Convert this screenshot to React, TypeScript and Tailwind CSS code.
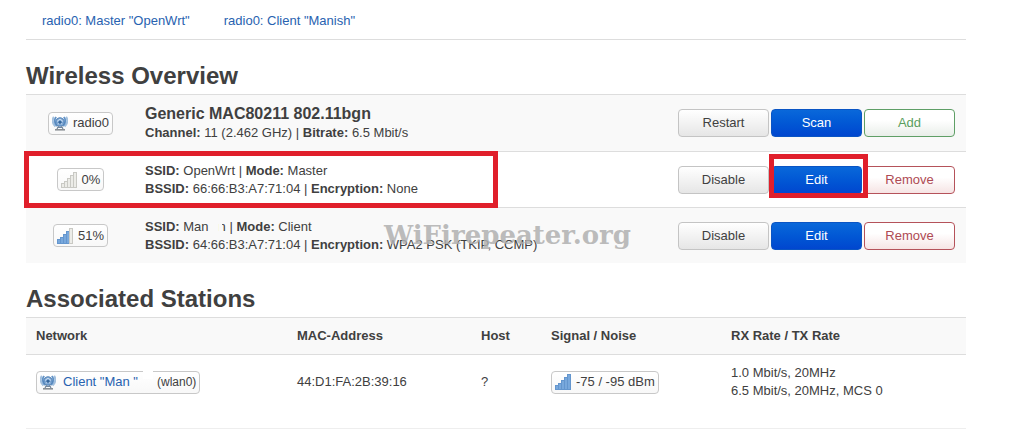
import clsx from "clsx";
import type { ReactNode } from "react";

type Tone = "neutral" | "primary" | "add" | "remove";

const TONES: Record<Tone, string> = {
  neutral: "border-[#c4c4c4] bg-linear-to-b from-white to-[#e6e6e6] text-[#404040]",
  primary: "border-[#0a55c4] bg-linear-to-b from-[#0a68da] to-[#0146cf] text-white",
  add: "border-[#5f9f66] bg-linear-to-b from-white from-40% to-[#e9eee9] text-[#5a9e5e]",
  remove: "border-[#b5525a] bg-linear-to-b from-white from-40% to-[#f6e4e4] text-[#ae4a54]",
};

const BAR_HEIGHTS = [4, 6, 9, 12, 15];

function WifiIcon() {
  return (
    <svg width="16" height="16" viewBox="0 0 16 16" fill="none" aria-hidden="true" className="shrink-0">
      <path d="M2 2C.2 4.500.2 8.500 3.500 11.500M14 2c1.800 2.500 1.800 6.500-1.500 9.500" stroke="#a3c0de" strokeWidth="2.200" />
      <path d="M4.200 2C2 4.500 2.200 8.500 5 11M11.800 2c2.200 2.500 2 6.500-.8 9" stroke="#5f91c6" strokeWidth="1.800" />
      <circle cx="8" cy="7" r="4.200" fill="#7fa9d6" stroke="#4a7cb3" />
      <path d="M5 6.500 8 4l3 2.500M6 9.500 8 7l2 2.500" stroke="#cfe0f2" />
      <circle cx="8" cy="7.200" r="1.500" fill="#35659b" />
      <path d="M6.500 11 5 14M9.500 11l1.500 3M5.500 12.500h5" stroke="#71869c" strokeWidth="1.200" />
      <path d="M3 14.800h10" stroke="#8a8f94" strokeWidth="1.600" />
    </svg>
  );
}

function SignalIcon({ bars }: { bars: number }) {
  return (
    <svg width="16" height="16" viewBox="0 0 16 16" aria-hidden="true" className="shrink-0">
      {BAR_HEIGHTS.map((h, i) => (
        <rect
          key={h}
          x={i * 3 + 0.5}
          y={15.5 - h}
          width="3"
          height={h}
          fill={i < bars ? "#78a8dc" : "#ecece8"}
          stroke={i < bars ? "#6496ce" : "#c9c9c4"}
        />
      ))}
    </svg>
  );
}

function Badge({ icon, children }: { icon: ReactNode; children: ReactNode }) {
  return (
    <span className="relative inline-flex h-[23px] items-center gap-[5px] rounded border border-[#c8c8c8] bg-linear-to-b from-white to-[#f8f8f8] px-[3px] align-middle whitespace-nowrap">
      {icon}
      {children}
    </span>
  );
}

function Button({ tone, children }: { tone: Tone; children: ReactNode }) {
  return (
    <button type="button" className={clsx("h-7 w-[91px] rounded border leading-4", TONES[tone])}>
      {children}
    </button>
  );
}

function Highlight({ className }: { className: string }) {
  return <span className={clsx("pointer-events-none absolute z-10 border-5 border-[#e01f2b]", className)} />;
}

function Row({ striped, badge, info, actions, children }: {
  striped?: boolean;
  badge: ReactNode;
  info: ReactNode;
  actions: ReactNode;
  children?: ReactNode;
}) {
  return (
    <li
      className={clsx(
        "relative flex min-h-14 items-center border-t border-[#ddd] py-[9px] pr-[11px]",
        striped && "bg-[#f9f9f9]",
      )}
    >
      <div className="w-[109px] shrink-0 text-center">{badge}</div>
      <div className="flex-1 pl-2.5">{info}</div>
      <div className="flex gap-0.5">{actions}</div>
      {children}
    </li>
  );
}

export default function App() {
  return (
    <main className="mr-[60px] ml-[26px] font-['Liberation_Sans',Arial,sans-serif] text-[13px] leading-[18px] text-[#404040]">
      <nav className="flex gap-[34px] border-b border-[#ddd] px-4 pt-3 pb-[9px] text-[#2862b0]">
        <a href="#openwrt">radio0: Master "OpenWrt"</a>
        <a href="#manish">radio0: Client "Manish"</a>
      </nav>

      <h2 className="mt-[18px] text-2xl leading-9 font-bold">Wireless Overview</h2>
      <ul>
        <Row
          striped
          badge={<Badge icon={<WifiIcon />}>radio0</Badge>}
          info={
            <>
              <h3 className="text-base leading-5 font-bold">Generic MAC80211 802.11bgn</h3>
              <p><b>Channel:</b> 11 (2.462 GHz) | <b>Bitrate:</b> 6.5 Mbit/s</p>
            </>
          }
          actions={
            <>
              <Button tone="neutral">Restart</Button>
              <Button tone="primary">Scan</Button>
              <Button tone="add">Add</Button>
            </>
          }
        />
        <Row
          badge={<Badge icon={<SignalIcon bars={0} />}>0%</Badge>}
          info={
            <>
              <p><b>SSID:</b> OpenWrt | <b>Mode:</b> Master</p>
              <p><b>BSSID:</b> 66:66:B3:A7:71:04 | <b>Encryption:</b> None</p>
            </>
          }
          actions={
            <>
              <Button tone="neutral">Disable</Button>
              <div className="relative">
                <Button tone="primary">Edit</Button>
                <Highlight className="-top-3 -right-1.5 -bottom-1 -left-0.5" />
              </div>
              <Button tone="remove">Remove</Button>
            </>
          }
        >
          <Highlight className="-top-px -bottom-px -left-0.5 w-[474px]" />
        </Row>
        <Row
          striped
          badge={<Badge icon={<SignalIcon bars={4} />}>51%</Badge>}
          info={
            <>
              <p>
                <b>SSID:</b> Man
                {/* part of the name is blanked out */}
                <span className="relative ml-2.5 inline-block">
                  n<span className="absolute inset-y-0 left-0 w-[3px] bg-[#f9f9f9]" />
                </span>{" "}
                | <b>Mode:</b> Client
              </p>
              <p><b>BSSID:</b> 64:66:B3:A7:71:04 | <b>Encryption:</b> WPA2 PSK (TKIP, CCMP)</p>
            </>
          }
          actions={
            <>
              <Button tone="neutral">Disable</Button>
              <Button tone="primary">Edit</Button>
              <Button tone="remove">Remove</Button>
            </>
          }
        >
          <span className="pointer-events-none absolute top-[18px] left-[358px] font-['DejaVu_Serif',serif] text-[26px] font-bold text-[#b0b0b0]/85">
            WiFirepeater.org
          </span>
        </Row>
      </ul>

      <h2 className="mt-[18px] text-2xl leading-9 font-bold">Associated Stations</h2>
      <table className="w-full table-fixed border-collapse text-left">
        <thead>
          <tr className="border-y border-[#ddd] bg-[#f9f9f9]">
            <th className="w-[261px] px-2.5 py-[9px]">Network</th>
            <th className="w-[184px] px-2.5">MAC-Address</th>
            <th className="w-[70px] px-2.5">Host</th>
            <th className="w-[180px] px-2.5">Signal / Noise</th>
            <th className="px-2.5">RX Rate / TX Rate</th>
          </tr>
        </thead>
        <tbody>
          <tr className="border-b border-[#eee]">
            <td className="px-2.5 pt-[9px] pb-7">
              <Badge icon={<WifiIcon />}>
                <a href="#client" className="ml-0.5 text-[#2862b0]">Client "Man "</a>
                <span className="absolute -top-px left-[106px] h-2 w-2.5 bg-white" />
                <span className="ml-3.5 text-xs">(wlan0)</span>
              </Badge>
            </td>
            <td className="px-2.5 pt-[9px] pb-7">44:D1:FA:2B:39:16</td>
            <td className="px-2.5 pt-[9px] pb-7">?</td>
            <td className="px-2.5 pt-[9px] pb-7">
              <Badge icon={<SignalIcon bars={5} />}>-75 / -95 dBm</Badge>
            </td>
            <td className="px-2.5 pt-[9px] pb-7">
              1.0 Mbit/s, 20MHz
              <br />
              6.5 Mbit/s, 20MHz, MCS 0
            </td>
          </tr>
        </tbody>
      </table>
    </main>
  );
}
